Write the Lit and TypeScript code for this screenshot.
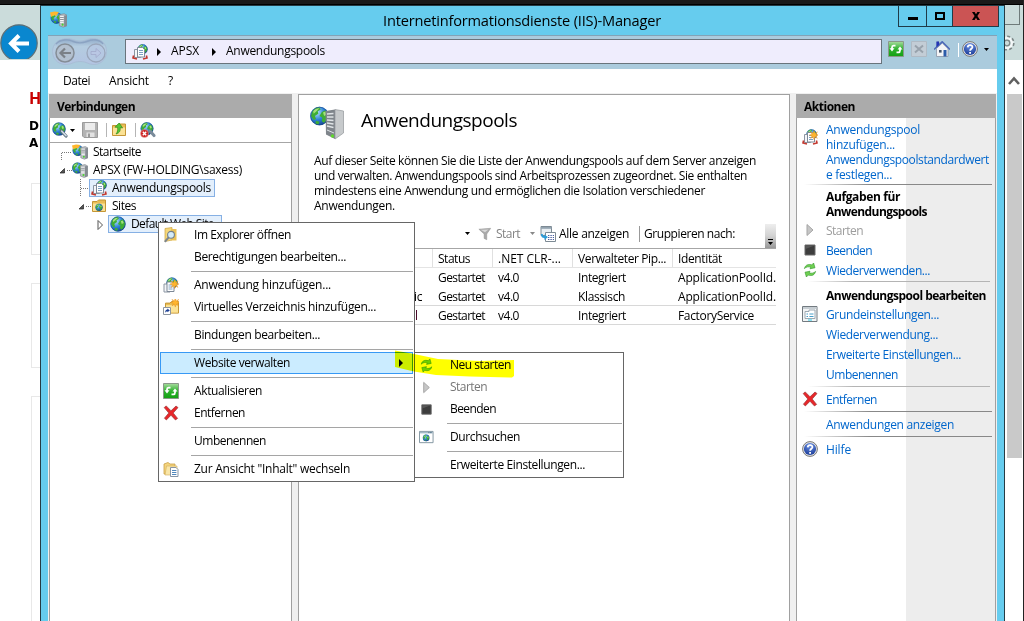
import { LitElement, html, css, svg, nothing } from "lit";
import { customElement, property } from "lit/decorators.js";

/** Single-line label whose tracking is adjusted so it spans a given width. */
@customElement("fit-text")
class FitText extends LitElement {
  @property() text = "";
  @property({ type: Number }) w = 0;
  static styles = css`
    :host { display: inline-block; white-space: pre; flex: none; }
  `;
  render() {
    return html`<span>${this.text}</span>`;
  }
  async firstUpdated() {
    await document.fonts.ready;
    const span = this.renderRoot.querySelector("span")!;
    const natural = span.getBoundingClientRect().width;
    if (this.w && natural) {
      this.style.letterSpacing = `${(this.w - natural) / this.text.length}px`;
    }
  }
}

const t = (text: string, w: number, cls = "") =>
  html`<fit-text class=${cls} .text=${text} .w=${w}></fit-text>`;

const globe = (cx: number, cy: number, r: number) => svg`
  <g transform="translate(${cx} ${cy}) scale(${r / 8})">
    <circle r="8" fill="url(#sea)"/>
    <path d="M-6.5-3.5C-5-6.5-2-8 0-7.4L1-5.5-1.5-4-1-2-4 0-3 2.5-5 3.5-7.4 0ZM2-3.5 5-5 7.5-1 7 2 4 6 2 4.5 2.5 1.5 0 0ZM-3 4 0 5-1 7.6-3.6 6.6Z" fill="#3fae35"/>
    <path d="M-5.5-4C-4-6-2-6.8 0-6.6L-2.6-4-5 -2ZM3-3 5-3.8 6-1 4 0Z" fill="#a5e07c"/>
    <circle r="7.6" fill="none" stroke="#174a8c" stroke-width=".8" opacity=".7"/>
  </g>`;
const tower = (x: number, y: number, s: number) => svg`
  <g transform="translate(${x} ${y}) scale(${s})">
    <path d="M0 1 5 0 8 1.5V12.5L4 14 0 12.5Z" fill="#b9bdc2" stroke="#777d84" stroke-width=".6"/>
    <path d="M5 1.8 8 1.5V12.5L5 13.8Z" fill="#858b92"/>
    <path d="M.8 3H4.5M.8 5H4.5M.8 7H4.5M.8 9H4.5" stroke="#fff" stroke-width="1"/>
    <path d="M.8 4H4.5M.8 6H4.5" stroke="#646b74" stroke-width=".6"/>
    <circle cx="3.4" cy="11.4" r="1.1" fill="#45d42c"/>
  </g>`;
const star = (x: number, y: number) => svg`
  <path transform="translate(${x} ${y})" d="M0-4.5 1-1.6 3.4-3.2 2-.8 4.6 0 2 1 3.3 3.4 1 1.8 0 4.6-1 1.8-3.3 3.4-2 1-4.6 0-2-.8-3.4-3.2-1-1.6Z" fill="#ffb52e" stroke="#e08a1c" stroke-width=".4"/>`;
const sheets = svg`
  <path d="M2.5 5.5H8.5V13.5H2.5Z" fill="#f4f6f9" stroke="#8b95a2"/>
  <path d="M5.5 3.5H10.5L12.5 5.5V13H5.5Z" fill="#fff" stroke="#7d8896"/>
  <path d="M7 6.5H11M7 8.5H11M7 10.5H11" stroke="#7da0c4"/>`;
const folder = svg`
  <path d="M1.5 3.5H6L7.5 2H14.5V13.5H1.5Z" fill="#e9bd55" stroke="#c49636"/>
  <path d="M2 5.5H14V13H2Z" fill="#fbe295"/>`;

const shapes: Record<string, unknown> = {
  app: svg`${globe(10.6, 5.2, 5)}${sheets}<path d="M1.6 11.5 1 14 5 15M14.4 11.5 15 14 11 15" stroke="#c3382f" stroke-width="1.6" fill="none"/>`,
  appnew: svg`${globe(9.5, 5.5, 5.2)}${sheets}<path d="M1.6 11.5 1 14 5 15M14.4 11.5 15 14 11 15" stroke="#c3382f" stroke-width="1.6" fill="none"/>${star(12, 6)}`,
  addapp: svg`${globe(9, 6, 5.6)}<g transform="translate(-1.5 1.5)">${sheets}</g>${star(11.6, 7)}`,
  start: svg`${globe(6, 6.5, 5.4)}<path d="M0 1.4 4 .4 8.4 1 6 4.4 3.6 4 1 5.6Z" fill="#ffb62c"/>${tower(8.8, 2.6, .9)}`,
  server: svg`${globe(5.6, 6, 5.5)}${tower(8.4, 2.6, .92)}`,
  globe: svg`${globe(8, 8, 7.6)}`,
  connect: svg`${globe(7, 7, 6.6)}<path d="M9.4 9 14 14" stroke="#5f7181" stroke-width="3.2" stroke-linecap="round"/><path d="M9.8 9.2 14 13.6" stroke="#cfdae3" stroke-width="1.6" stroke-linecap="round"/>`,
  disconnect: svg`${globe(7, 6.6, 6.4)}<path d="M10 9 14 13.6" stroke="#7a8b9a" stroke-width="3" stroke-linecap="round"/><circle cx="4.5" cy="11.5" r="4" fill="#cc2424" stroke="#f2b0a8" stroke-width=".5"/><path d="M2.8 9.8 6.2 13.2M6.2 9.8 2.8 13.2" stroke="#fff" stroke-width="1.4"/>`,
  save: svg`<path d="M.5.5H15.5V15.5H2L.5 14Z" fill="#b3b3b3" stroke="#9c9c9c"/><path d="M3 1H13V8H3Z" fill="#ececec"/><path d="M4.5 10.5H12.5V15H4.5Z" fill="#e2e2e2"/><path d="M6 11.5H8V15H6Z" fill="#9a9a9a"/>`,
  up: svg`${folder}<path d="M5 12C9 11 9.5 8 9.2 5.6L11.6 6 8.2 1 4 5.2 6.6 5.3C7 8 6.6 10 5 12Z" fill="#55c935" stroke="#2e8a1d" stroke-width=".7"/>`,
  sites: svg`${folder}${globe(8, 9.3, 3.6)}`,
  explore: svg`<path d="M2 1.5 9 .5V13L2 14.5Z" fill="#f5d77a" stroke="#caa03e" stroke-width=".7"/><path d="M8 2H13.5V13.5H8Z" fill="#eac258"/><path d="M6 10 1.8 14.8" stroke="#7d868f" stroke-width="2"/><circle cx="8" cy="7.8" r="3.4" fill="#d4ecfa" stroke="#73808c" stroke-width="1.1"/>`,
  virtual: svg`<g transform="translate(1 .6)">${folder}</g>${star(12.3, 3.5)}<path d="M.5 8.5H7.5V15.5H.5Z" fill="#fff" stroke="#8c95a0"/><path d="M2.2 14C2 11.6 3.2 10.6 4.4 10.6V9.4L6.8 11.4 4.4 13.3V12.2C3.2 12.2 2.6 13 2.2 14Z" fill="#1c3f94"/>`,
  refresh: svg`<path d="M.5.5H15.5V15.5H.5Z" fill="url(#grn)" stroke="#8a988a"/><path d="M7.5 4.6H5.6Q4 4.8 4 6.6V8M8.5 11.4H10.4Q12 11.2 12 9.4V8" stroke="#fff" stroke-width="1.8" fill="none"/><path d="M1.5 7.2H6.5L4 10.4ZM9.5 8.6H14.5L12 5.4Z" fill="#fff"/>`,
  stopx: svg`<path d="M.5.5H15.5V15.5H.5Z" fill="#c3cdd6" stroke="#b0bac4"/><path d="M4 4.5 12 11.5M12 4.5 4 11.5" stroke="#98a2ac" stroke-width="2"/>`,
  home: svg`<path d="M3 1H5V5H3ZM2.5 7.5V15.5H14V7.5L8.3 2Z" fill="#f3f4f6" stroke="#8a94a6" stroke-width=".8"/><path d="M0 8.5 8.2.8 16 8.5" stroke="#4c68b8" stroke-width="1.6" fill="none"/><path d="M2.4.6H5V4L2.4 6Z" fill="#2436b4"/><path d="M9.5 9H12.5V15.5H9.5Z" fill="#2c5caa"/><path d="M5 9H7.6V11.6H5Z" fill="#44536a"/>`,
  help: svg`<circle cx="8" cy="8" r="7.4" fill="#e6e6e6" stroke="#777" stroke-width="1"/><circle cx="8" cy="8" r="6.1" fill="url(#blu)"/><path d="M5.7 6.4C5.8 3.2 10.6 3.4 10.4 6.2 10.3 7.8 8.1 7.8 8.1 9.8M8.1 11V12.8" stroke="#fff" stroke-width="1.8" fill="none"/>`,
  del: svg`<path d="M1.2 2.6 3.2.9 8 5.8 13 1 15 2.6 10.2 8 14.6 13.4 12.4 14.9 8 10.2 3.4 14.9 1.4 13.2 5.8 8Z" fill="#e8262a" stroke="#9c3a3a" stroke-width=".7"/>`,
  content: svg`<path d="M1 3 5 1.5 7 3H12V13H1Z" fill="#f4d47c" stroke="#c9a048" stroke-width=".8"/><path d="M3.5 5H14V9L12 14H2Z" fill="#f9e6a8" stroke="#d1ac58" stroke-width=".6"/><path d="M7.5 6.5H13L15 8.5V15.5H7.5Z" fill="#fff" stroke="#8795a6"/><path d="M9 9.5H13.4M9 11.5H13.4M9 13.5H13.4" stroke="#4f87bd"/>`,
  recycle: svg`<path d="M2.4 6.6C3.2 2.8 6.6 1.8 9.8 2.9L11.6 1 13 5.8 8 6.8 8.8 5.2C6.6 4.4 4.2 4.8 2.4 6.6Z" fill="#6fd052" stroke="#2f9426" stroke-width=".6"/><path d="M13.6 9.4C12.8 13.2 9.4 14.2 6.2 13.1L4.4 15 3 10.200 8 9.2 7.2 10.8C9.4 11.6 11.8 11.2 13.6 9.4Z" fill="#6fd052" stroke="#2f9426" stroke-width=".6"/>`,
  play: svg`<path d="M5 2.5 11 8 5 13.5Z" fill="#b9b9b9" stroke="#8f8f8f"/>`,
  stop: svg`<path d="M3 3H13V13H3Z" fill="#3d3d3d" stroke="#6a6a6a"/><path d="M3.5 7 12.5 3.5H3.5Z" fill="#595959"/>`,
  browse: svg`<path d="M.5 1.5H15V13.5H.5Z" fill="#fff" stroke="#7f939f"/><path d="M1 2H14.5V3.6H1Z" fill="#a3bac8"/><path d="M10 2.8H14" stroke="#496a80" stroke-dasharray="1 .6"/>${globe(7.6, 8.4, 3.5)}`,
  props: svg`<path d="M.5.5H15V15.5H.5Z" fill="#f3f5f6" stroke="#727a80"/><path d="M1 1H14.5V3H1Z" fill="#c7ced3"/><path d="M3 5.5H7V4H13V12.5H3Z" fill="#fff" stroke="#93a0aa" stroke-width=".9"/><path d="M4.5 8H6M7.4 8H11.5M4.5 10.5H6M7.4 10.5H11.5" stroke="#4a9ec9"/><path d="M6 14H10" stroke="#47d3ee" stroke-width="1.2"/>`,
  funnel: svg`<path d="M1 2.5 14.5 1.5 10 8V14.5L7 13V8Z" fill="#a9a9a9" stroke="#939393" stroke-width=".6"/><path d="M3 3.2 12 2.8 8 6Z" fill="#d8d8d8"/>`,
  showall: svg`<path d="M1 .5H11.5V9.5H1Z" fill="#e9eef2" stroke="#7d8a94"/><path d="M1 1H11.5V2.8H1Z" fill="#93a3af"/><path d="M5.5 6.5H15.5V15.5H5.5Z" fill="#fff" stroke="#7d8a94"/><path d="M8 9.5H14M8 11.5H14M8 13.5H14" stroke="#4a5ea0" stroke-dasharray="1.4 1"/><path d="M1 8C1 11 2.4 12 4.4 12V14L8 11 4.4 8.4V10C3 10 2.8 9.4 2.8 8Z" fill="#2b9bd8"/>`,
};
const icon = (name: string, cls = "") =>
  html`<svg class="ic ${cls}" viewBox="0 0 16 16">${shapes[name] ?? nothing}</svg>`;
const caret = (cls: string) => html`<svg class="caret ${cls}" viewBox="0 0 5 3"><path d="M0 0H5L2.5 3Z" fill="currentColor"/></svg>`;
const crumb = (cls: string) => html`<svg class="crumb ${cls}" viewBox="0 0 4 8"><path d="M0 0 4 4 0 8Z"/></svg>`;

type Item = { icon?: string; text?: string; w?: number; off?: boolean; sub?: boolean; sep?: boolean };
const sep: Item = { sep: true };
const siteMenu: Item[] = [
  { icon: "explore", text: "Im Explorer öffnen", w: 97 },
  { text: "Berechtigungen bearbeiten...", w: 152 },
  sep,
  { icon: "addapp", text: "Anwendung hinzufügen...", w: 137 },
  { icon: "virtual", text: "Virtuelles Verzeichnis hinzufügen...", w: 182 },
  sep,
  { text: "Bindungen bearbeiten...", w: 126 },
  sep,
  { text: "Website verwalten", w: 96, sub: true },
  sep,
  { icon: "refresh", text: "Aktualisieren", w: 68 },
  { icon: "del", text: "Entfernen", w: 51 },
  sep,
  { text: "Umbenennen", w: 72 },
  sep,
  { icon: "content", text: "Zur Ansicht \"Inhalt\" wechseln", w: 156 },
];
const manageMenu: Item[] = [
  { icon: "recycle", text: "Neu starten", w: 61 },
  { icon: "play", text: "Starten", w: 37, off: true },
  { icon: "stop", text: "Beenden", w: 46 },
  sep,
  { icon: "browse", text: "Durchsuchen", w: 70 },
  sep,
  { text: "Erweiterte Einstellungen...", w: 135 },
];
const menu = (items: Item[], cls: string) => html`
  <div class="menu ${cls}">
    ${items.map((i) => i.sep
      ? html`<div class="msep"></div>`
      : html`<div class="mi ${i.sub ? "hot" : ""} ${i.off ? "off" : ""}">
          <span class="mic">${i.icon ? icon(i.icon) : nothing}</span>
          ${t(i.text!, i.w!)}
          ${i.sub ? crumb("subarrow") : nothing}
        </div>`)}
  </div>`;

const act = (ic: string, text: string, w: number, cls = "") => html`
  <div class="act ${cls}"><span class="aic">${ic ? icon(ic) : nothing}</span>${t(text, w)}</div>`;

const pools = [
  { name: "", nw: 0, mode: "Integriert", mw: 48, id: "ApplicationPoolId.", iw: 98 },
  { name: "ic", nw: 8, mode: "Klassisch", mw: 47, id: "ApplicationPoolId.", iw: 98 },
  { name: "l", nw: 3, mode: "Integriert", mw: 48, id: "FactoryService", iw: 76 },
];

@customElement("app-root")
class AppRoot extends LitElement {
  static styles = css`
    :host { display: block; position: relative; width: 1024px; height: 621px; overflow: hidden;
      background: #fff; color: #000; font: 12px/15px "Open Sans", "Noto Sans", sans-serif; }
    * { box-sizing: border-box; }
    svg { display: block; flex: none; }
    .defs { position: absolute; width: 0; height: 0; }
    .ic { width: 16px; height: 16px; }
    .ic.s14 { width: 14px; height: 14px; }
    .caret { width: 5px; height: 3px; }
    .crumb { width: 4px; height: 8px; }

    .browser { display: flex; flex-direction: column; height: 621px; border-right: 1px solid #222; }
    .strip { height: 5px; flex: none; background: #1a1a1a; border-bottom: 1px solid #000; }
    .chrome { height: 55px; flex: none; background: #cbdcdb; display: flex; justify-content: space-between; overflow: hidden; }
    .back { width: 40px; height: 55px; }
    .chromeright { width: 19px; display: flex; flex-direction: column; gap: 10px; }
    .tabbox { width: 16px; height: 20px; flex: none; border: solid #6f7b7b; border-width: 0 1px 1px 0; }
    .gear { width: 12px; height: 16px; }
    .page { height: 561px; flex: none; display: flex; justify-content: space-between; overflow: hidden; }
    .doc { width: 50px; padding: 29px 0 0 29px; display: flex; flex-direction: column; }
    .h { font: bold 16px/18px "Open Sans", sans-serif; color: #c80000; }
    .b { font: bold 12px/17px "DejaVu Sans", sans-serif; }
    .b.first { margin-top: 11px; }
    .box { width: 30px; border: 1px solid #e8e8e8; margin-left: 2px; flex: none; }
    .box1 { height: 72px; margin-top: 31px; }
    .box2 { height: 85px; margin-top: 28px; }
    .box3 { height: 260px; margin-top: 28px; }
    .scroll { width: 18px; padding-top: 16px; display: flex; flex-direction: column; gap: 9px; }
    .scroll svg { width: 12px; height: 9px; margin-left: 3px; }
    .thumb { width: 15px; height: 364px; flex: none; margin-left: 2px; background: #c9c9c9; }

    .win { position: absolute; left: 40px; top: 5px; width: 965px; height: 616px; background: #66ccee;
      border: 1px solid #253b44; border-bottom: 0; padding: 0 7px; display: flex; flex-direction: column; }
    .title { height: 29px; flex: none; display: flex; justify-content: space-between; align-items: flex-start; margin-right: -2px; }
    .title .ic { margin: 5px 0 0 2px; width: 17px; height: 17px; }
    .title .cap { font-size: 14.6px; line-height: 20px; margin: 4px 0 0 79px; }
    .btns { display: flex; height: 21px; border: 1px solid #1f3b48; border-top: 0; width: 101px; }
    .btns span { display: flex; align-items: center; justify-content: center; border-right: 1px solid #1f3b48; width: 28px; }
    .btns .mx { width: 26px; }
    .btns .cl { flex: 1; background: #cb5454; border: 0; }
    .btns svg { width: 12px; height: 10px; }

    .nav { height: 34px; flex: none; background: #abcbdd; border-top: 1px solid #82a3b7; display: flex; align-items: flex-start; padding: 2px 0 0 4px; }
    .pods { width: 55px; height: 28px; }
    .addr { margin: 1px 0 0 18px; width: 757px; height: 25px; background: #efedfd; border: 1px solid #69747c; display: flex; align-items: center; padding-left: 6px; }
    .addr .c1 { margin: 0 10px 0 9px; }
    .addr .c2 { margin: 0 10px 0 13px; }
    .addr fit-text { padding-bottom: 2px; }
    .tools { display: flex; align-items: center; height: 22px; margin-left: 6px; }
    .tools .g { margin-left: 7px; }
    .vs { width: 1px; height: 14px; background: #fff; margin: 2px 3px 0 8px; }
    .tools .caret { margin-left: 6px; }
    .menubar { height: 24px; flex: none; background: #fff; display: flex; align-items: center; padding: 0 0 1px 15px; gap: 19px; }

    .body { flex: 1; background: #f0f0f0; padding: 1px 1px 0; display: grid; grid-template-columns: 243px 492px 200px; column-gap: 6px; min-height: 0; }
    .pane { background: #fff; border: 1px solid #a0a0a0; border-width: 0 1px; }
    .hd { height: 24px; margin: 0 -1px; background: #ababab; padding: 5px 0 0 8px; font-weight: bold; }
    .ltb { height: 25px; border-bottom: 1px solid #a6a6a6; display: flex; align-items: center; padding-left: 2px; }
    .ltb .caret { margin: 0 7px 0 2px; }
    .ltb .v { width: 1px; height: 14px; background: #b5b5b5; margin: 0 4px 0 8px; }
    .row { height: 18px; display: flex; align-items: center; }
    .row svg.lead { height: 18px; }
    .l22 { width: 22px; } .l39 { width: 39px; } .l41 { width: 41px; } .l58 { width: 58px; }
    .row fit-text { margin-left: 5px; padding-bottom: 2px; }
    .sel { height: 18px; display: flex; align-items: center; border: 1px solid #86b0e4; background: #e3effc; padding: 0 3px 0 1px; }
    .sel.wide { padding: 0 7px 0 1px; }

    .main { background: #fff; border: 1px solid #a0a0a0; border-bottom: 0; padding: 11px 13px 0 15px; }
    .head { display: flex; height: 34px; margin-left: -4px; gap: 16px; }
    .head svg { width: 35px; height: 34px; }
    .head fit-text { font-size: 19px; line-height: 28px; }
    .para { margin-top: 13px; display: flex; flex-direction: column; }
    .ptb { margin-top: 11px; height: 25px; border-bottom: 1px solid #a6a6a6; display: flex; align-items: center; padding: 0 0 5px 151px; }
    .ptb .gr { color: #838383; }
    .ptb .f { margin: 0 4px 0 8px; }
    .ptb .c2 { margin: 0 5px 0 10px; color: #888; }
    .ptb .a { margin-right: 3px; }
    .ptb .v { width: 1px; height: 16px; background: #999; margin: 0 4px 0 10px; }
    .ovf { width: 11px; height: 24px; margin: 0 0 -5px auto; background: linear-gradient(#eee, #d2d2d2 50%, #999); padding: 15px 0 0 2px; }
    .ovf svg { width: 7px; height: 7px; }
    .grid { display: grid; grid-template-columns: 118px 60px 80px 100px 104px; height: 19px; align-items: center; border-bottom: 1px solid transparent; }
    .grid > span { padding-left: 6px; overflow: hidden; height: 18px; display: flex; align-items: center; }
    .grid .n { justify-content: flex-end; padding: 0 10px 0 0; }
    .grid .n.lst { padding-right: 14px; color: #402; }
    .gh { border-color: #e4e4e4; }
    .gh > span + span { border-left: 1px solid #e0e0e0; padding-left: 5px; }
    .ln { border-color: #d8d8d8; }

    .actions { display: flex; flex-direction: column; background: linear-gradient(90deg, #fff 109px, #ededed 109px); }
    .actions .hd { flex: none; }
    .list { padding: 4px 0 0 6px; display: flex; flex-direction: column; }
    .act { display: flex; height: 20px; align-items: center; color: #0066cc; }
    .act.off { color: #9d9d9d; }
    .act.bold { color: #000; font-weight: bold; height: 15px; }
    .act.l { height: 15px; }
    .aic { width: 23px; flex: none; }
    .aic .ic { margin-left: -1px; }
    .low .aic .ic { position: relative; top: 7px; }
    .hr { height: 1px; flex: none; margin: 2px 3px 4px 1px; background: linear-gradient(90deg, transparent, #888 35%); }
    .hr.soft { margin: 1px 5px 6px 5px; background: linear-gradient(90deg, transparent, #b4b4b4 25%); }
    .hr.mid { margin: 2px 3px 2px 1px; }
    .hr.e { margin: 2px 5px 2px 5px; background: linear-gradient(90deg, transparent, #b4b4b4 25%); }
    .gap { height: 1px; }

    .menu { position: absolute; background: #fff; border: 1px solid #666; padding: 1px; }
    .m1 { left: 158px; top: 222px; width: 257px; }
    .m2 { left: 414px; top: 352px; width: 210px; }
    .mi { height: 22px; display: flex; align-items: center; border: 1px solid transparent; padding-left: 2px; }
    .mi fit-text { padding-bottom: 1px; }
    .mic { width: 31px; flex: none; }
    .m2 .mic .ic { width: 15px; height: 15px; }
    .msep { height: 6px; margin-left: 31px; background: linear-gradient(#a5a5a5, #a5a5a5) 0 3px / 100% 1px no-repeat; }
    .hot { background: #cbecff; border-color: #3799f5; }
    .off { color: #777; }
    .off .ic { opacity: .8; }
    .subarrow { margin-left: auto; margin-right: 9px; }
    .marker { position: absolute; left: 390px; top: 345px; width: 130px; height: 36px; mix-blend-mode: multiply; }
  `;

  render() {
    return html`
      <svg class="defs"><defs>
        <radialGradient id="sea" cx=".35" cy=".3" r=".8"><stop offset="0" stop-color="#b8e6ff"/><stop offset=".5" stop-color="#2f83d6"/><stop offset="1" stop-color="#123a86"/></radialGradient>
        <radialGradient id="blu" cx=".5" cy=".2" r=".9"><stop offset="0" stop-color="#6d93e6"/><stop offset="1" stop-color="#12328f"/></radialGradient>
        <linearGradient id="grn" x1="0" y1="0" x2="0" y2="1"><stop offset="0" stop-color="#a9dca0"/><stop offset=".5" stop-color="#2eb22e"/><stop offset="1" stop-color="#12a012"/></linearGradient>
        <linearGradient id="pod" x1="0" y1="0" x2="0" y2="1"><stop offset="0" stop-color="#8fa9c8"/><stop offset=".3" stop-color="#b4cce0"/><stop offset="1" stop-color="#b3c4e2"/></linearGradient>
      </defs></svg>

      <div class="browser">
        <div class="strip"></div>
        <div class="chrome">
          <svg class="back" viewBox="0 0 40 55"><circle cx="19" cy="38" r="18.2" fill="#0a87cf" stroke="#5e6e74" stroke-width="1.2"/><path d="M0 54H40V55H0Z" fill="#cbdcdb"/><path d="M29 38.5H12M19 30.5 11 38.5 19 46.5" fill="none" stroke="#fff" stroke-width="4"/></svg>
          <div class="chromeright">
            <div class="tabbox"></div>
            <svg class="gear" viewBox="0 0 12 16"><g fill="none" stroke="#7d8888"><circle cx="3" cy="8" r="5" stroke="#f4f8f8" stroke-width="3"/><circle cx="3" cy="8" r="6.800" stroke-width="1.6" stroke-dasharray="3 2.340"/><circle cx="3" cy="8" r="2.800" stroke-width="1.3"/></g></svg>
          </div>
        </div>
        <div class="page">
          <div class="doc">
            <div class="h">H</div>
            <div class="b first">D</div>
            <div class="b">A</div>
            <div class="box box1"></div><div class="box box2"></div><div class="box box3"></div>
          </div>
          <div class="scroll">
            <svg viewBox="0 0 12 9"><path d="M1 8 6 2.5 11 8" fill="none" stroke="#606060" stroke-width="2.6"/></svg>
            <div class="thumb"></div>
          </div>
        </div>
      </div>

      <div class="win">
        <div class="title">
          ${icon("start")}
          ${t("Internetinformationsdienste (IIS)-Manager", 278, "cap")}
          <div class="btns">
            <span><svg viewBox="0 0 12 10"><path d="M1 6H11V9H1Z"/></svg></span>
            <span class="mx"><svg viewBox="0 0 12 10"><path d="M2 2H10V8H2Z" fill="none" stroke="#000" stroke-width="2"/></svg></span>
            <span class="cl"><svg viewBox="0 0 12 10"><path d="M2 1H4.6L6 3.2 7.4 1H10L7.4 5 10 9H7.4L6 6.8 4.6 9H2L4.6 5Z"/></svg></span>
          </div>
        </div>
        <div class="nav">
          <svg class="pods" viewBox="0 0 55 28">
            <path d="M13 .8C20 0 22 3 28 3S36 0 43 .8C51 1.5 54.5 7 54.5 13.5S50 26 43 26.5C37 27 35 23.5 28 23.5S19 27 13 26.5C5 26 .5 20 .5 13.5S5 1.5 13 .8Z" fill="url(#pod)" stroke="#a9bed6"/>
            <path d="M4 6C8 1 17 1 21 3.5 26 5.5 31 5 35 3.5 40 1 48 1 51 6" fill="none" stroke="#8ba3c2" stroke-width="1.4"/>
            <circle cx="13" cy="15" r="9" fill="#b3c0cf" stroke="#858d96" stroke-width="1.5"/>
            <path d="M19 15H9M13 10.5 8.5 15 13 19.5" fill="none" stroke="#7b8087" stroke-width="2.2"/>
            <circle cx="44" cy="15" r="9" fill="#b5c8e2" stroke="#9aa6ba" stroke-width="1.3"/>
            <path d="M39 13.5H44V10.5L49 15 44 19.5V16.5H39Z" fill="#b9c7e4" stroke="#a2a9cc" stroke-width=".8"/>
          </svg>
          <div class="addr">${icon("app")}${crumb("c1")}${t("APSX", 28)}${crumb("c2")}${t("Anwendungspools", 99)}</div>
          <div class="tools">${icon("refresh")}${icon("stopx", "g")}${icon("home", "g")}<span class="vs"></span>${icon("help")}${caret("")}</div>
        </div>
        <div class="menubar">${t("Datei", 27)}${t("Ansicht", 40)}${t("?", 6)}</div>
        <div class="body">
          <div class="pane">
            <div class="hd">${t("Verbindungen", 78)}</div>
            <div class="ltb">
              ${icon("connect")}${caret("")}${icon("save")}<span class="v"></span>${icon("up")}<span class="v"></span>${icon("disconnect")}
            </div>
            <div class="row"><svg class="lead l22" viewBox="0 0 22 18"><path d="M11.5 10V18M12 9.5H22" stroke="#777" stroke-dasharray="1 1" fill="none"/></svg>${icon("start")}${t("Startseite", 48)}</div>
            <div class="row"><svg class="lead l22" viewBox="0 0 22 18"><path d="M17 9.5H22" stroke="#777" stroke-dasharray="1 1"/><path d="M10 12H14.5V7.5Z" fill="#555" stroke="#222" stroke-width=".7"/></svg>${icon("server")}${t("APSX (FW-HOLDING\\saxess)", 149)}</div>
            <div class="row"><svg class="lead l39" viewBox="0 0 39 18"><path d="M30.5 0V18M31 9.5H39" stroke="#777" stroke-dasharray="1 1"/></svg><div class="sel">${icon("app")}${t("Anwendungspools", 99)}</div></div>
            <div class="row"><svg class="lead l41" viewBox="0 0 41 18"><path d="M36 9.5H41" stroke="#777" stroke-dasharray="1 1"/><path d="M29 12H33.5V7.5Z" fill="#555" stroke="#222" stroke-width=".7"/></svg>${icon("sites")}${t("Sites", 24)}</div>
            <div class="row"><svg class="lead l58" viewBox="0 0 58 18"><path d="M48 5.5 52.5 10 48 14.5Z" fill="#fff" stroke="#555"/></svg><div class="sel wide">${icon("globe")}${t("Default Web Site", 83)}</div></div>
          </div>

          <div class="main">
            <div class="head">
              <svg viewBox="0 0 35 34">${globe(9.5, 10, 9.3)}
                <path d="M15.5 5 25 3.5V33L16 28.5Z" fill="#7f858b"/><path d="M25 3.5 33.5 5V27L25 33Z" fill="#c7cacc" stroke="#92979b" stroke-width=".7"/>
                <path d="M17 8 23.5 7.5M17 11 23.5 11M17 14 23.5 14.5M17 17 23.5 18M17 20 23.5 21.5" stroke="#dfe3e6" stroke-width="1.6"/>
                <path d="M17 24 24 27" stroke="#dfe3e6"/><circle cx="22.5" cy="30" r="1.7" fill="#5fd82c"/></svg>
              ${t("Anwendungspools", 156)}
            </div>
            <div class="para">
              ${t("Auf dieser Seite können Sie die Liste der Anwendungspools auf dem Server anzeigen", 442)}
              ${t("und verwalten. Anwendungspools sind Arbeitsprozessen zugeordnet. Sie enthalten", 433)}
              ${t("mindestens eine Anwendung und ermöglichen die Isolation verschiedener", 391)}
              ${t("Anwendungen.", 81)}
            </div>
            <div class="ptb">
              ${caret("")}${icon("funnel", "f s14")}${t("Start", 24, "gr")}${caret("c2")}${icon("showall", "a")}${t("Alle anzeigen", 70)}<span class="v"></span>${t("Gruppieren nach:", 91)}
              <span class="ovf"><svg viewBox="0 0 7 7"><path d="M1 0H6V1H1ZM1 3H6L3.5 6Z"/></svg></span>
            </div>
            <div class="grid gh"><span></span><span>${t("Status", 32)}</span><span>${t(".NET CLR-...", 63)}</span><span>${t("Verwalteter Pip...", 88)}</span><span>${t("Identität", 44)}</span></div>
            ${pools.map((p, i) => html`
              <div class="grid ${i ? "ln" : ""}">
                <span class="n ${i === 2 ? "lst" : ""}">${p.name ? t(p.name, p.nw) : nothing}</span>
                <span>${t("Gestartet", 47)}</span><span>${t("v4.0", 21)}</span><span>${t(p.mode, p.mw)}</span><span>${t(p.id, p.iw)}</span>
              </div>`)}
          </div>

          <div class="pane actions">
            <div class="hd">${t("Aktionen", 51)}</div>
            <div class="list">
              ${act("appnew", "Anwendungspool", 94, "l low")}
              ${act("", "hinzufügen...", 69, "l")}
              ${act("", "Anwendungspoolstandardwert", 163, "l")}
              ${act("", "e festlegen...", 66, "l")}
              <div class="hr"></div>
              ${act("", "Aufgaben für", 74, "bold")}
              ${act("", "Anwendungspools", 101, "bold")}
              <div class="gap"></div>
              ${act("play", "Starten", 37, "off")}
              ${act("stop", "Beenden", 46)}
              ${act("recycle", "Wiederverwenden...", 104)}
              <div class="hr soft"></div>
              ${act("", "Anwendungspool bearbeiten", 160, "bold")}
              <div class="gap"></div>
              ${act("props", "Grundeinstellungen...", 113)}
              ${act("", "Wiederverwendung...", 112)}
              ${act("", "Erweiterte Einstellungen...", 135)}
              ${act("", "Umbenennen", 72)}
              <div class="hr e"></div>
              ${act("del", "Entfernen", 51)}
              <div class="hr mid"></div>
              ${act("", "Anwendungen anzeigen", 128)}
              <div class="hr mid"></div>
              ${act("help", "Hilfe", 25)}
            </div>
          </div>
        </div>
      </div>

      ${menu(manageMenu, "m2")}
      ${menu(siteMenu, "m1")}
      <svg class="marker" viewBox="0 0 130 36"><path d="M5 5.5 24 9 48 14 90 16 124 15V31L122 32.5 80 31.5 46 30 24 26.5 5 22Z" fill="#ff0"/></svg>
    `;
  }
}
